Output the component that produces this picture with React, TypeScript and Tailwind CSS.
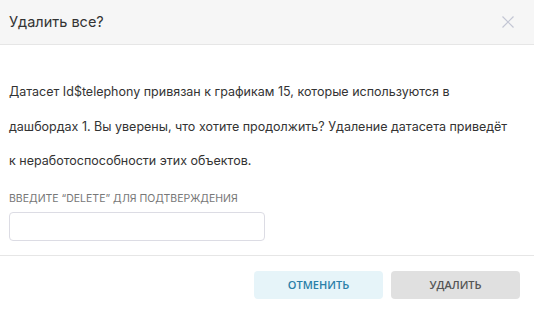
export default function App() {
  return (
    <div className="w-[534px] h-[310px] bg-white font-['Inter','Noto_Sans',sans-serif] text-[#333]">
      <div className="h-[45px] bg-[#f6f6f6] border-b border-[#e6e6e6] flex items-center justify-between pl-[9px] pr-[20px]">
        <h2 className="text-[14.5px] text-[#333]">Удалить все?</h2>
        <button className="text-[#c3c6d4]">
          <svg width="12" height="12" viewBox="0 0 12 12" fill="none" stroke="currentColor" strokeWidth="1.2">
            <path d="M0.5 0.5 L11.5 11.5 M11.5 0.5 L0.5 11.5" />
          </svg>
        </button>
      </div>

      <div className="px-[9px] pt-[30px]">
        <p className="text-[12.5px] leading-[34.5px] text-[#333]">
          Датасет Id$telephony привязан к графикам 15, которые используются в
          <br />
          дашбордах 1. Вы уверены, что хотите продолжить? Удаление датасета приведёт
          <br />
          к неработоспособности этих объектов.
        </p>
        <label className="block mt-[12px] text-[10.5px] text-[#777] uppercase">
          Введите “DELETE” для подтверждения
        </label>
        <input
          type="text"
          className="mt-[6px] block w-[256px] h-[29px] border border-[#dcdce4] rounded-[4px] outline-none"
        />
      </div>

      <div className="mt-[14px] border-t border-[#e6e6e6] flex justify-end gap-[8px] pt-[15px] pr-[14px] font-['Open_Sans',sans-serif]">
        <button className="w-[129px] h-[28px] rounded-[4px] bg-[#e6f4f9] text-[#2a7fa8] text-[11px] font-semibold">
          ОТМЕНИТЬ
        </button>
        <button className="w-[129px] h-[28px] rounded-[4px] bg-[#e0e0e0] text-[#555] text-[11px] font-semibold">
          УДАЛИТЬ
        </button>
      </div>
    </div>
  );
}
